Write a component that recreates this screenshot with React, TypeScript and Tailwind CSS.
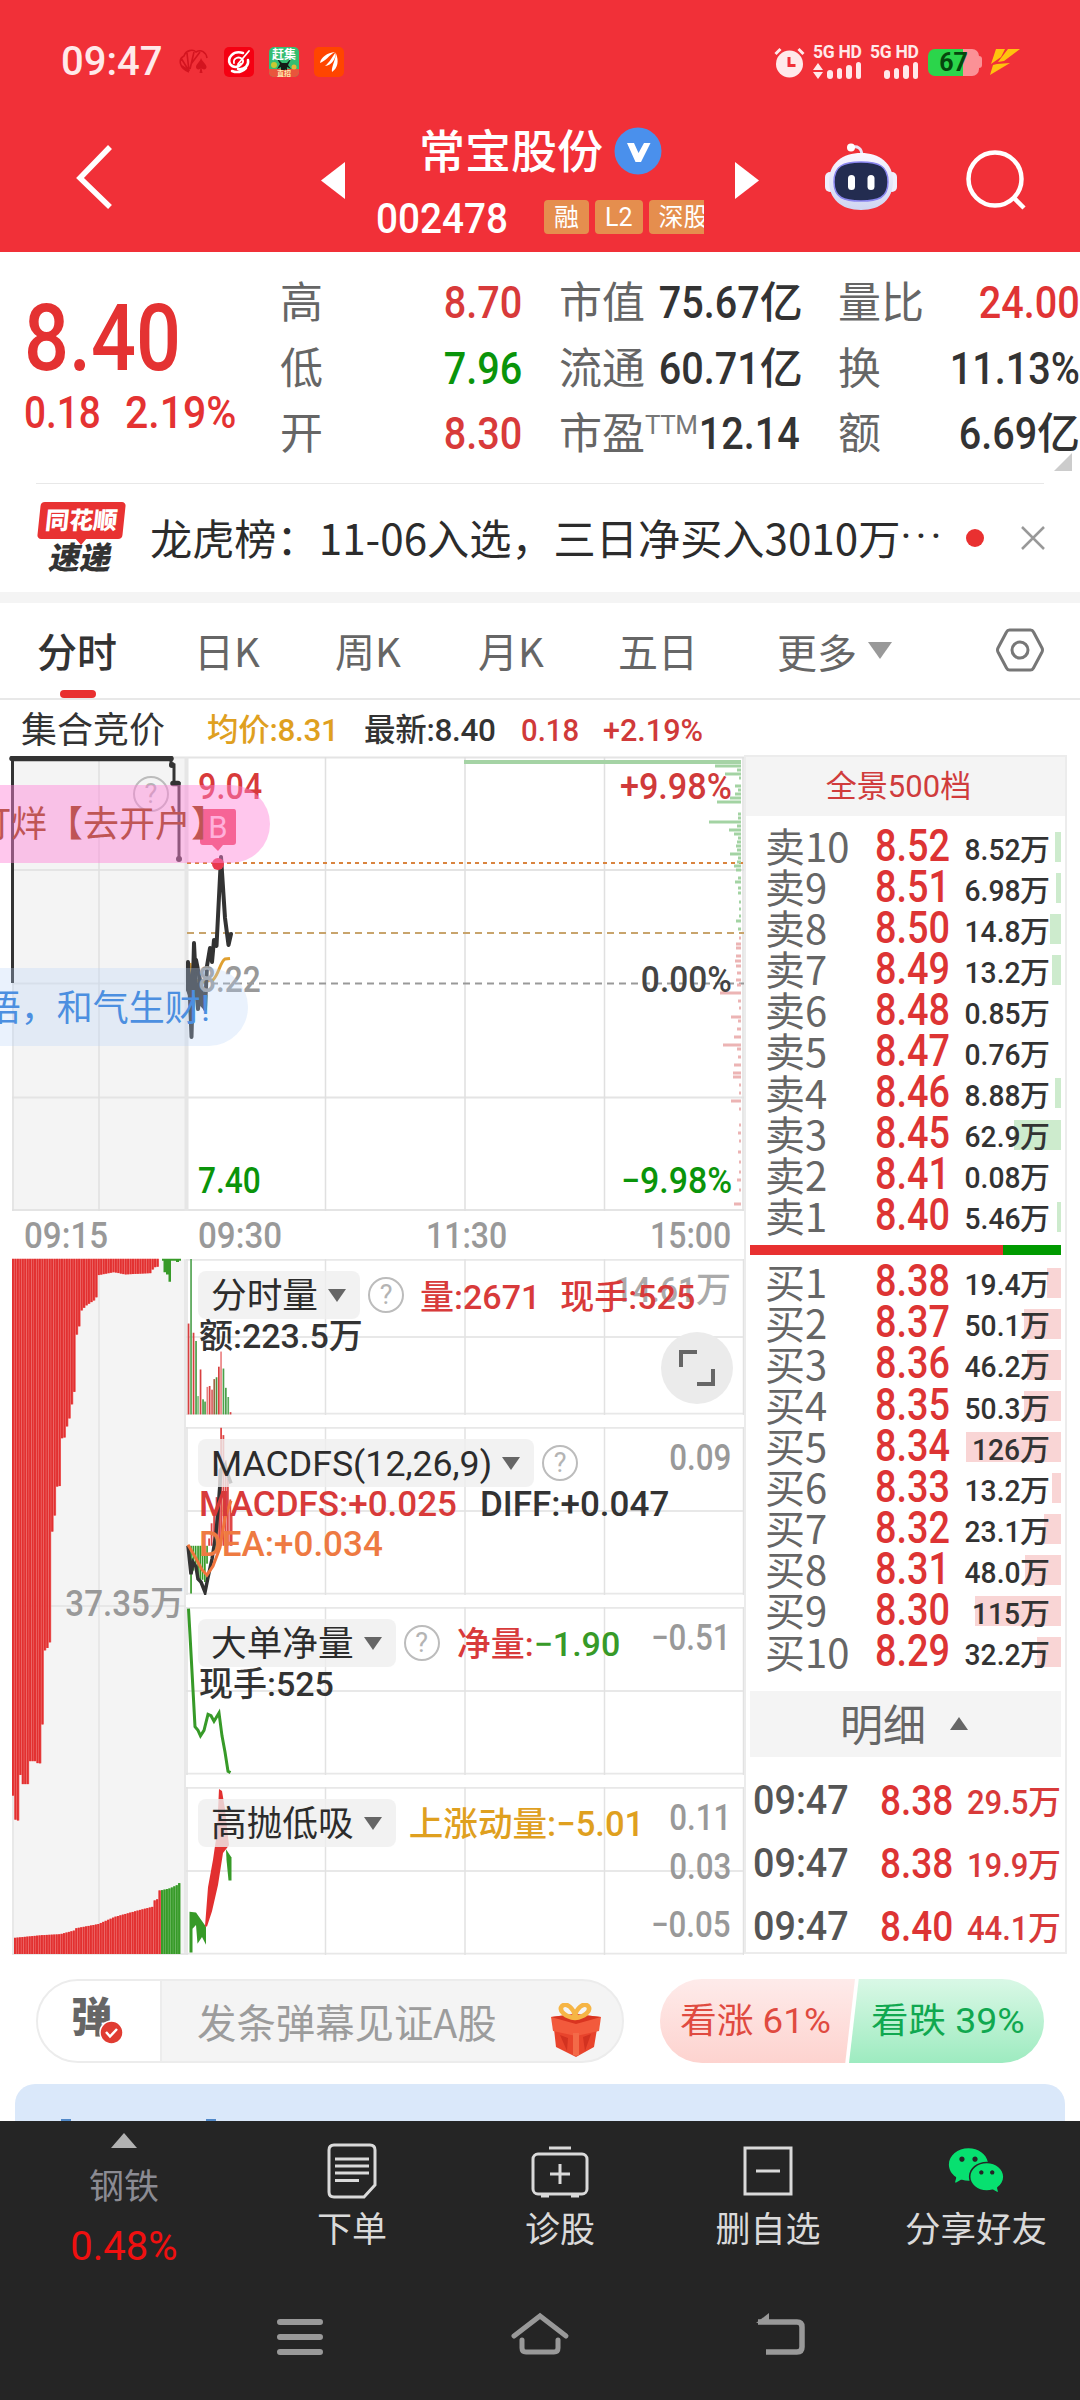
import React from 'react';
import { AiFillWechat } from 'react-icons/ai';
import clsx from 'clsx';

type Level = { label: string; price: string; vol: string; bar: number };

const sells: Level[] = [
  { label: '卖10', price: '8.52', vol: '8.52', bar: 6 },
  { label: '卖9', price: '8.51', vol: '6.98', bar: 5 },
  { label: '卖8', price: '8.50', vol: '14.8', bar: 11 },
  { label: '卖7', price: '8.49', vol: '13.2', bar: 9 },
  { label: '卖6', price: '8.48', vol: '0.85', bar: 0 },
  { label: '卖5', price: '8.47', vol: '0.76', bar: 0 },
  { label: '卖4', price: '8.46', vol: '8.88', bar: 6 },
  { label: '卖3', price: '8.45', vol: '62.9', bar: 47 },
  { label: '卖2', price: '8.41', vol: '0.08', bar: 0 },
  { label: '卖1', price: '8.40', vol: '5.46', bar: 4 },
];

const buys: Level[] = [
  { label: '买1', price: '8.38', vol: '19.4', bar: 14 },
  { label: '买2', price: '8.37', vol: '50.1', bar: 37 },
  { label: '买3', price: '8.36', vol: '46.2', bar: 34 },
  { label: '买4', price: '8.35', vol: '50.3', bar: 37 },
  { label: '买5', price: '8.34', vol: '126', bar: 95 },
  { label: '买6', price: '8.33', vol: '13.2', bar: 9 },
  { label: '买7', price: '8.32', vol: '23.1', bar: 17 },
  { label: '买8', price: '8.31', vol: '48.0', bar: 36 },
  { label: '买9', price: '8.30', vol: '115', bar: 86 },
  { label: '买10', price: '8.29', vol: '32.2', bar: 24 },
];

const deals = [
  { time: '09:47', price: '8.38', vol: '29.5' },
  { time: '09:47', price: '8.38', vol: '19.9' },
  { time: '09:47', price: '8.40', vol: '44.1' },
];

// [y, left edge] of the order depth drawn along the right side of the chart
const depthGreen = [
  [766, 715], [770, 737], [774, 725], [778, 739], [786, 735], [790, 738], [794, 735], [798, 730], [802, 717],
  [814, 738], [818, 738], [822, 709], [826, 737], [830, 729], [834, 734], [838, 738], [842, 737], [846, 736], [850, 737],
  [854, 730], [858, 738], [862, 737], [866, 734], [870, 736], [878, 738], [882, 735], [888, 738], [893, 738],
  [902, 739], [909, 739], [916, 739], [921, 736], [929, 738],
];
const depthRed = [
  [938, 739], [944, 736], [948, 736], [956, 736], [961, 735], [966, 736], [973, 737], [980, 736], [985, 737], [993, 720],
  [1001, 738], [1008, 739], [1017, 731], [1021, 738], [1029, 737], [1037, 734], [1045, 723], [1049, 737], [1057, 738],
  [1065, 734], [1073, 733], [1077, 733], [1085, 739], [1093, 739], [1101, 731], [1109, 739], [1125, 739], [1133, 738],
  [1141, 739], [1152, 738], [1162, 739], [1172, 739], [1180, 737], [1190, 739], [1204, 734],
];

const auctionTop = [
  [12, 1210], [14.9, 1210], [15, 1262], [19, 1265], [19.1, 1165], [21, 1165], [21.1, 1185], [29, 1185], [29.1, 1135], [36, 1135], [36.1, 1139],
  [41.5, 1140], [41.6, 1055], [44, 1055], [44.1, 895], [47, 890], [51, 870], [51.1, 635], [54, 635], [54.1, 600], [57, 600], [57.1, 537],
  [61.5, 535], [61.6, 432], [64.5, 430], [67, 405], [70, 384], [72, 355], [74.5, 328], [74.6, 206], [77, 206], [77.1, 188],
  [79.5, 188], [79.6, 158], [86, 143], [95, 130], [97, 122], [97.1, 77], [114, 70], [125, 75], [152, 72], [153, 60], [158, 58], [158.1, 44], [163, 43],
];
const auctionBottom = [
  [14, 1520], [28, 1517], [42, 1514], [60, 1512], [74, 1504], [76, 1499], [98, 1490], [115, 1474], [140, 1459], [153, 1452], [154, 1439], [158, 1435], [158.1, 1417], [162, 1416],
  [170, 1412], [177, 1405], [181, 1397],
];

const volBars: [number, number, string][] = [
  [188.5, 182, '#d84040'], [191, 41, '#55a555'], [193.5, 202, '#d84040'], [196, 220, '#4aa04a'], [198, 340, '#7fc07f'],
  [200.5, 282, '#d84040'], [203, 347, '#4aa04a'], [205, 352, '#4aa04a'], [207.3, 320, '#e88080'], [209.6, 318, '#d84040'],
  [212, 326, '#d86060'], [214.2, 303, '#a06040'], [216.5, 299, '#50903c'], [218.8, 276, '#d84040'], [221, 243, '#ec8484'],
  [223.4, 280, '#4aa04a'], [225.8, 322, '#4aa04a'], [228.2, 342, '#5cab5c'], [230.5, 375, '#d84040'],
];

const macdGreen = [[189, 690], [191, 770], [193.3, 720], [195.6, 715], [198, 735], [200.2, 745], [202.5, 740], [204.8, 745], [207, 705]];
const macdRed = [
  [209, 650], [211.5, 617], [214, 600], [216.5, 560], [219, 500], [221, 409], [223.3, 425], [225.6, 480], [227.8, 520], [230.2, 565], [231.5, 595],
];

const interp = (pts: number[][], x: number) => {
  for (let i = 1; i < pts.length; i++) {
    if (x <= pts[i][0]) {
      const [x0, y0] = pts[i - 1];
      const [x1, y1] = pts[i];
      return y0 + ((y1 - y0) * (x - x0)) / (x1 - x0 || 1);
    }
  }
  return pts[pts.length - 1][1];
};

const Help = ({ className = '' }) => (
  <span className={clsx('flex h-9 w-9 shrink-0 items-center justify-center rounded-full border-[2.5px] border-[#bcbcbc] text-[27px] leading-none font-normal text-[#b4b4b4]', className)}>
    ?
  </span>
);

const Badge = ({ children }: { children: React.ReactNode }) => (
  <div className="flex h-12 shrink-0 items-center rounded-lg bg-[#efefef]/80 pr-[14px] pl-[13px] text-[35.7px] leading-none font-normal whitespace-nowrap text-[#2c2c2c]">
    <span className="pt-[3px]">{children}</span>
    <span className="ml-[10px] h-0 w-0 border-x-[9.5px] border-t-[13px] border-x-transparent border-t-[#666]" />
  </div>
);

const Panel = ({ top, children, drawing, className }: { top: number; children: React.ReactNode; drawing: React.ReactNode; className: string }) => {
  const h = top === 41.4 ? 339.8 : 365.9;
  return (
    <div className={clsx('relative', className)}>
      <svg className="absolute inset-0 h-full w-full" viewBox={`186 ${top} 558 ${h}`} preserveAspectRatio="none">
        <g stroke="#e2e2e2" strokeWidth="1.5">
          <path d={`M186 ${top + 2}H744M186 ${top + h / 2}H744M186 ${top + h - 3}H744`} stroke="#e8e8e8" strokeWidth="4" />
          <path d={`M187 ${top}v${h}M325.5 ${top}v${h}M465 ${top}v${h}M604.5 ${top}v${h}M743.5 ${top}v${h}`} />
        </g>
        {drawing}
      </svg>
      <div className="relative pl-3 pt-3">{children}</div>
    </div>
  );
};

const Axis = ({ children, className }: { children: React.ReactNode; className: string }) => (
  <span className={clsx('absolute right-[13px] origin-right scale-x-[.87] text-[36px] leading-none font-medium text-[#999]', className)}>{children}</span>
);

const StatusBar = () => (
  <div className="flex h-[124px] items-center pl-[61px] text-[#ffe9ea]">
    <span className="w-[118px] text-[40px] leading-none font-medium">09:47</span>
    <svg className="w-[30px]" height="26" viewBox="0 0 30 26" fill="none" stroke="#d3141f" strokeWidth="1.6">
      <path d="M10 23C0 19-1 10 5 7C7 1 14 0 17 3C22 0 27 3 28 9M10 22L2 9M10 22L8 4M11 20L15 3M12 15L21 3M3 17l7 5" />
      <path d="M22 9c-1 4-5 6-5 9c0 3 4 3 4.500 1l-1 5h3l-1-5c1 2 5 2 5-1c0-3-4-5-5.500-9z" fill="#d3141f" stroke="none" />
    </svg>
    <svg className="ml-[15px]" width="30" height="30" viewBox="0 0 30 30">
      <rect width="30" height="30" rx="5" fill="#f50012" />
      <g fill="none" stroke="#fff" strokeLinecap="round">
        <path d="M19 6C9 3 3 11 6 17c3 4 8 4 11 0" strokeWidth="2.600" />
        <path d="M10 16c-1-5 5-7 8-4s-1 7-4 6M25 4L14 17" strokeWidth="1.800" />
        <path d="M24 13c1 5-3 10-10 9M8 24c5 2 10 1 14-3" strokeWidth="2.500" />
      </g>
    </svg>
    <svg className="ml-[15px]" width="30" height="30" viewBox="0 0 30 30">
      <rect width="30" height="30" rx="5" fill="#35bd72" />
      <path d="M0 22h30v3a5 5 0 0 1-5 5H5a5 5 0 0 1-5-5z" fill="#e9553c" />
      <circle cx="5" cy="18" r="3" fill="#c8c832" />
      <circle cx="25" cy="20" r="2.500" fill="#e6b83a" />
      <path d="M7 10l6 6h5l5-6-4 8 3 4-4-2v3h-6v-3l-4 2 3-5z" fill="#151a16" />
      <text x="15" y="12" textAnchor="middle" fontSize="12" fontWeight="700" fill="#fff">赶集</text>
      <text x="15" y="29" textAnchor="middle" fontSize="7" fontWeight="700" fill="#ffe9b0">直招</text>
    </svg>
    <svg className="ml-[15px]" width="30" height="30" viewBox="0 0 30 30">
      <rect width="30" height="30" rx="5" fill="#ff4500" />
      <path d="M6 16C7 10 13 6 21 5C15 8 12 14 6 16zM11 19C16 15 18 10 21.500 5.500C22 12 18 18 11 19zM18 25C17 20 21 15 22 6.500C25 14 24 21 18 25z" fill="#fff" />
    </svg>
    <svg className="ml-[430px]" width="31" height="31" viewBox="0 0 31 31">
      <circle cx="15.500" cy="17" r="13.500" fill="#ffe9ea" />
      <path d="M1.500 7l5-5M29.500 7l-5-5" stroke="#ffe9ea" strokeWidth="3" />
      <path d="M15 10v8.500h6.500" stroke="#f13038" strokeWidth="3" fill="none" />
    </svg>
    {[0, 1].map((i) => (
      <div key={i} className={clsx('flex h-[34px] w-[48px] flex-col justify-between', i === 0 ? 'ml-2' : 'ml-[9px]')}>
        <span className="text-[17.500px] leading-[15px] font-bold tracking-[-.3px] whitespace-nowrap">5G HD</span>
        <div className="flex items-end justify-end gap-1">
          {i === 0 && (
            <svg width="10" height="16" viewBox="0 0 10 16" fill="#ffe9ea">
              <path d="M0 7l5-7 5 7zM0 9l5 7 5-7z" />
            </svg>
          )}
          <i className="h-[9px] w-[5.500px] rounded-sm bg-[#ffe9ea]" />
          <i className="h-[11px] w-[5.500px] rounded-sm bg-[#ffe9ea]" />
          <i className="h-[14px] w-[5.500px] rounded-sm bg-[#ffe9ea]" />
          <i className="h-[17px] w-[5.500px] rounded-sm bg-[#ffe9ea]" />
        </div>
      </div>
    ))}
    <div className="ml-[10px] flex items-center">
      <div className="flex h-[27px] w-[51px] items-center justify-center rounded-[7px] bg-[linear-gradient(90deg,#2bd54b_68%,#fb9196_68%)] text-[25px] leading-none font-bold text-[#06460d]">67</div>
      <i className="h-[12px] w-[3px] rounded-r bg-[#fb9196]" />
    </div>
    <svg className="ml-[8px]" width="31" height="26" viewBox="0 0 31 26" fill="#ffc20e">
      <path d="M6 0h9L11 8L1 15zM18 0h12L14 12L8 13zM7 15l13-1L0 26l3-10z" />
    </svg>
  </div>
);

const Tag = ({ children }: { children: React.ReactNode }) => (
  <span className="h-[34px] shrink-0 rounded bg-[#e58e4e] px-[10px] text-[25px] leading-[35px] whitespace-nowrap">{children}</span>
);

const TitleBar = () => (
  <div className="flex h-32 text-white">
    <svg className="mt-[20px] ml-[76px] shrink-0" width="38" height="66" viewBox="0 0 38 66" fill="none" stroke="#fff" strokeWidth="5.500">
      <path d="M34 3L4 34L34 63" />
    </svg>
    <svg className="mt-[38px] ml-[207px] shrink-0" width="24" height="37" viewBox="0 0 24 37" fill="#fff">
      <path d="M24 0v37L0 18.500z" />
    </svg>
    <div className="ml-[31px] w-[330px]">
      <div className="flex items-center pl-[43px]">
        <span className="pt-[2px] text-[46px] leading-[52px] font-medium">常宝股份</span>
        <svg className="ml-[11px]" width="48" height="48" viewBox="0 0 48 48">
          <circle cx="24" cy="24" r="23.500" fill="#4a90ec" />
          <path d="M13 16h7l4.500 10L30 16h6.500L27 35h-5.500z" fill="#fff" />
        </svg>
      </div>
      <div className="mt-[21px] flex items-center">
        <span className="w-[168px] origin-left scale-x-[.9] pt-[2px] text-[43px] leading-[34px] font-medium">002478</span>
        <div className="flex w-[160px] gap-[6px] overflow-hidden">
          <Tag>融</Tag>
          <Tag>L2</Tag>
          <Tag>深股通</Tag>
        </div>
      </div>
    </div>
    <svg className="mt-[38px] ml-[29px] shrink-0" width="24" height="37" viewBox="0 0 24 37" fill="#fff">
      <path d="M0 0v37L24 18.500z" />
    </svg>
    <svg className="mt-[19px] ml-[66px] shrink-0" width="72" height="68" viewBox="0 0 72 68">
      <defs>
        <linearGradient id="head" x1="0" y1="0" x2="0" y2="1">
          <stop offset="0" stopColor="#fbf7ff" />
          <stop offset="1" stopColor="#cfd5f2" />
        </linearGradient>
      </defs>
      <path d="M26 5c6-3 11 0 11 8" stroke="#e9e4f6" strokeWidth="3" fill="none" />
      <circle cx="26" cy="4.500" r="4" fill="#fff" />
      <rect y="29" width="10" height="20" rx="5" fill="#f0eefc" />
      <rect x="62" y="29" width="10" height="20" rx="5" fill="#f0eefc" />
      <path d="M36 10C54 10 68 20 68 38S56 67 36 67S4 56 4 38S18 10 36 10z" fill="url(#head)" />
      <path d="M36 19c18 0 27 4 27 20s-10 19-27 19S9 55 9 39s9-20 27-20z" fill="#232c50" stroke="#8a86ef" strokeWidth="1.500" />
      <rect x="23" y="32" width="7" height="15" rx="3.500" fill="#fff" />
      <rect x="42.500" y="32" width="7" height="15" rx="3.500" fill="#fff" />
    </svg>
    <svg className="mt-[25px] ml-[68px] shrink-0" width="62" height="62" viewBox="0 0 62 62" fill="none" stroke="#fff" strokeWidth="4.500">
      <circle cx="30" cy="30" r="26.500" />
      <path d="M48.500 48.500L59 59" />
    </svg>
  </div>
);

const Stat = ({ label, sup, value, unit, color = 'text-[#333]' }: { label: string; sup?: string; value: string; unit?: string; color?: string }) => (
  <div className="flex h-[65.500px] items-center whitespace-nowrap">
    <span className="pt-[2px] text-[43px] leading-none text-[#666]">{label}</span>
    {sup && <span className="-mt-[18px] -mr-6 text-[26px] leading-none tracking-[-.5px] text-[#777]">{sup}</span>}
    <span className={clsx('ml-auto flex items-center leading-none', color)}>
      <span className="inline-block origin-right scale-x-[.88] text-[45px] font-medium">{value}</span>
      {unit && <span className="pt-[2px] text-[43px] font-medium">{unit}</span>}
    </span>
  </div>
);

const Quote = () => (
  <div className="relative flex h-[231px] pt-[18px]">
    <div className="w-[280px] pl-[24px] leading-none font-medium text-[#e43232]">
      <div className="mt-[23px] origin-left scale-x-[.86] text-[92px]">8.40</div>
      <div className="mt-[5px] flex text-[45px]">
        <span className="w-[101px] origin-left scale-x-[.86]">0.18</span>
        <span className="origin-left scale-x-[.91]">2.19%</span>
      </div>
    </div>
    <div className="w-[242px]">
      <Stat label="高" value="8.70" color="text-[#d83a3a]" />
      <Stat label="低" value="7.96" color="text-[#0a940a]" />
      <Stat label="开" value="8.30" color="text-[#d83a3a]" />
    </div>
    <div className="ml-[37px] w-[241px]">
      <Stat label="市值" value="75.67" unit="亿" />
      <Stat label="流通" value="60.71" unit="亿" />
      <Stat label="市盈" sup="TTM" value="12.14" />
    </div>
    <div className="ml-[38px] w-[242px]">
      <Stat label="量比" value="24.00" color="text-[#e03434]" />
      <Stat label="换" value="11.13%" />
      <Stat label="额" value="6.69" unit="亿" />
    </div>
    <span className="absolute top-[201px] right-2 h-0 w-0 border-b-[18px] border-l-[18px] border-b-[#ccc] border-l-transparent" />
  </div>
);

const News = () => (
  <div className="flex h-[108px] items-center pl-9">
    <div className="relative flex w-[90px] shrink-0 flex-col items-center">
      <span className="h-[37px] w-[85px] -skew-x-6 rounded bg-[#e83232] text-center text-[24px] leading-[38px] font-black text-white">同花顺</span>
      <span className="absolute top-[36px] h-0 w-0 border-x-[6px] border-t-[7px] border-x-transparent border-t-[#e83232]" />
      <span className="mt-[4px] -skew-x-12 text-[31px] leading-[32px] font-black text-[#333]">速递</span>
    </div>
    <div className="-mt-[3px] ml-[24px] flex w-[814px] text-[42.200px] leading-[60px] whitespace-nowrap text-[#2c2c2c]">
      <span className="[font-family:'Noto_Sans_CJK_SC',sans-serif]">龙虎榜：11-06入选，三日净买入3010万</span>
      <span className="tracking-[4px]">···</span>
    </div>
    <i className="ml-[2px] h-[18px] w-[18px] shrink-0 rounded-full bg-[#e93030]" />
    <svg className="ml-[37px] shrink-0" width="24" height="24" viewBox="0 0 24 24" stroke="#999" strokeWidth="2.500">
      <path d="M1 1L23 23M23 1L1 23" />
    </svg>
  </div>
);

const Tabs = () => (
  <div className="flex h-[97px] border-b-2 border-[#e8e8e8] [font-family:'Noto_Sans_CJK_SC',sans-serif] text-[40px] leading-[94px] text-[#666]">
    <div className="flex w-[158px] flex-col pl-[37px] font-medium text-[#333]">
      <span className="h-[87px]">分时</span>
      <i className="ml-[23px] h-[9px] w-9 rounded-full bg-[#e93030]" />
    </div>
    <span className="w-[141px] pl-[36px]">日K</span>
    <span className="w-[143px] pl-[36px]">周K</span>
    <span className="w-[140px] pl-[36px]">月K</span>
    <span className="w-[159px] pl-[36px]">五日</span>
    <span className="flex w-[254px] items-center pl-[36px]">
      更多
      <i className="ml-[11px] h-0 w-0 border-x-[12px] border-t-[17px] border-x-transparent border-t-[#999]" />
    </span>
    <svg className="mt-[24px]" width="50" height="46" viewBox="0 0 50 46" fill="none" stroke="#777" strokeWidth="3">
      <path d="M14.500 3h21q2 0 3 2L47 21q1 2 0 4L38.500 41q-1 2-3 2h-21q-2 0-3-2L3 25q-1-2 0-4L11.500 5q1-2 3-2z" />
      <circle cx="25" cy="23" r="8" />
    </svg>
  </div>
);

const MainChart = () => (
  <div className="relative h-[455px] text-[36px] leading-none font-medium">
    <svg className="absolute inset-0" width="744" height="455" viewBox="0 756 744 455" fill="none">
      <rect x="12" y="757" width="174" height="454" fill="#f4f4f4" />
      <path d="M12 757.500H744M12 870H744M12 983.500H186M12 1097.500H744M12 1210H744" stroke="#e4e4e4" strokeWidth="2" />
      <path d="M13 757V1211M99 757V1211M325.500 757V1211M465 757V1211M604.500 757V1211M743 757V1211" stroke="#e0e0e0" strokeWidth="1.500" />
      <path d="M186.500 757V1211" stroke="#e6e6e6" strokeWidth="4" />
      <path d="M187 863H744" stroke="#d9843f" strokeWidth="2" strokeDasharray="4 4" />
      <path d="M187 933H744" stroke="#c8a46c" strokeWidth="2" strokeDasharray="7 5" />
      <path d="M187 983.500H744" stroke="#999" strokeWidth="2" strokeDasharray="7 5" />
      <path d="M464 762H741" stroke="#a5d3a5" strokeWidth="4" />
      {depthGreen.map(([y, x]) => <rect key={y} x={x} y={y - 1.5} width={741 - x} height="3" fill="#a3d3a3" />)}
      {depthRed.map(([y, x]) => <rect key={y} x={x} y={y - 1.5} width={741 - x} height="3" fill="#ecb4b4" />)}
      <path d="M12.500 983V758" stroke="#333" strokeWidth="3" />
      <path d="M11 758.500H171V765H174V783.500H179V859" stroke="#333" strokeWidth="3" />
      <path d="M12 758.500H171" stroke="#333" strokeWidth="5.500" strokeLinecap="round" />
      <circle cx="172" cy="765" r="3" fill="#333" />
      <path d="M173 783.500H178" stroke="#333" strokeWidth="5.500" strokeLinecap="round" />
      <circle cx="179" cy="859" r="3" fill="#333" />
      <path d="M190 963L192 978L200 982L213 980C219 974 220 962 225 959L230 958.500" stroke="#e0a030" strokeWidth="3" />
      <path d="M188 962L190 1000L191.500 1037L194 943L196 985L198 1009L200 982L203 1000L205 1009L207 966L210 948L212 962L214 940L216.500 946L221 857L225 918L228.500 945L231 934" stroke="#333" strokeWidth="4" strokeLinejoin="round" strokeLinecap="round" />
      <path d="M188 962V990L192 1000V975L196 960L201 985V1004L205 1008" stroke="#333" strokeWidth="4" strokeLinejoin="round" />
      <path d="M201 809h33q2 0 2 3v30q0 3-3 3h-10l-5 6l-6-6h-9q-3 0-3-3v-30z" fill="#ee4a60" />
      <text x="218" y="838" textAnchor="middle" fontSize="31" fontWeight="400" fill="#ffd5dd">B</text>
      <circle cx="218" cy="864" r="6" fill="#e8384d" />
    </svg>
    <Help className="absolute top-5 left-[133px]" />
    <span className="absolute top-[13px] left-[198px] origin-left scale-x-[.9] text-[#d83a3a]">9.04</span>
    <span className="absolute top-[13px] right-[12px] origin-right scale-x-[.95] text-[#d03a3a]">+9.98%</span>
    <span className="absolute top-[206px] left-[198px] origin-left scale-x-[.88] text-[#999]">8.22</span>
    <span className="absolute top-[206px] right-[12px] origin-right scale-x-[.93] text-[#444]">0.00%</span>
    <span className="absolute bottom-[12px] left-[198px] origin-left scale-x-[.88] text-[#0a940a]">7.40</span>
    <span className="absolute right-[12px] bottom-[12px] origin-right scale-x-[.94] text-[#0a940a]">−9.98%</span>
    <div className="absolute top-[29px] left-0 flex h-[78px] w-[270px] justify-end overflow-hidden rounded-r-full bg-[#ff83d8]/45 pr-[43px] text-[36px] leading-[81px] font-normal whitespace-nowrap text-[#bf5555]">
      打烊【去开户】
    </div>
    <div className="absolute top-[212px] left-0 flex h-[78px] w-[248px] justify-end overflow-hidden rounded-r-full bg-[#b8d4fa]/30 pr-[38px] text-[36px] leading-[82px] font-normal whitespace-nowrap text-[#4c8fe0]">
      语，和气生财!
    </div>
  </div>
);

const AuctionVolume = () => {
  const topBars: number[] = [];
  for (let x = 12; x < 158.5; x += 2.45) topBars.push(x);
  const bottomBars: number[] = [];
  for (let x = 14; x < 180; x += 2.45) bottomBars.push(x);
  return (
    <div className="relative w-[186px]">
      <svg className="absolute inset-0 h-full w-full" viewBox="0 39.2 186 1518" preserveAspectRatio="none">
        <rect x="12" y="42" width="174" height="1514" fill="#f4f4f4" />
        <path d="M13 42V1555M99 42V1555M185 42V1555" stroke="#e4e4e4" strokeWidth="1.500" />
        <path d="M12 797H186M12 1555H186" stroke="#e2e2e2" strokeWidth="3" />
        {topBars.map((x) => (
          <g key={x}>
            <rect x={x} y="41" width="2.460" height={interp(auctionTop, x + 1) - 41} fill="#f07070" />
            <rect x={x} y="41" width="1.900" height={interp(auctionTop, x + 1) - 41} fill="#e23030" />
          </g>
        ))}
        <path d="M162 41H181V45H179V48H176V45H171V91H168.500V75H166V70H163.500V45H162z" fill="#379a28" />
        {bottomBars.map((x) => (
          <g key={x}>
            <rect x={x} y={interp(auctionBottom, x + 1)} width="2.460" height={1555 - interp(auctionBottom, x + 1)} fill={x > 160 ? '#6cb860' : '#f07070'} />
            <rect x={x} y={interp(auctionBottom, x + 1)} width="1.900" height={1555 - interp(auctionBottom, x + 1)} fill={x > 160 ? '#379a28' : '#e23030'} />
          </g>
        ))}
      </svg>
      <span className="absolute top-[328px] right-[2px] flex text-[34px] leading-none font-medium text-[#999]">
        <span className="origin-right scale-x-[.92] text-[36px]">37.35</span>万
      </span>
    </div>
  );
};

const Indicators = () => (
  <div className="flex h-[697px]">
    <AuctionVolume />
    <div className="flex w-[558px] flex-col gap-3 pt-px text-[35px] leading-none font-medium whitespace-nowrap">
      <Panel
        top={41.4}
        className="h-[156px]"
        drawing={volBars.map(([x, v, c]) => <rect key={x} x={x - 0.8} y={v} width="1.700" height={380 - v} fill={c} />)}
      >
        <div className="flex items-center">
          <Badge>分时量</Badge>
          <Help className="ml-2" />
          <span className="z-10 ml-[16px] pt-[3px] text-[34px] text-[#d83a3a]">量:2671</span>
          <span className="z-10 ml-[20px] pt-[3px] text-[34px] text-[#d83a3a]">现手:525</span>
        </div>
        <div className="pl-[1px] text-[34px] leading-[35px] text-[#333]">额:223.5万</div>
        <span className="absolute top-[14px] right-[13px] flex text-[#aaa]">
          <span className="origin-right scale-x-[.92]">14.61</span>万
        </span>
        <div className="absolute top-[73px] right-[11px] flex h-[72px] w-[72px] items-center justify-center rounded-full bg-[#ebebeb]">
          <svg width="38" height="38" viewBox="0 0 38 38" fill="none" stroke="#666" strokeWidth="4">
            <path d="M3 18V3H19M35 20V35H19" />
          </svg>
        </div>
      </Panel>
      <Panel
        top={407.3}
        className="h-[168px]"
        drawing={
          <g fill="none">
            {macdGreen.map(([x, v]) => <rect key={x} x={x - 0.8} y="666" width="1.700" height={v - 666} fill="#379a28" />)}
            {macdRed.map(([x, v]) => <rect key={x} x={x - 0.8} y={v} width="1.800" height={666 - v} fill="#e04848" />)}
            <path d="M188 666L191 728L193 702L196 712L198 738L201 745L205 767L208 735L212 695L216 640L219 560L221 500L225 490L228 512L231 530" stroke="#333" strokeWidth="3.500" vectorEffect="non-scaling-stroke" />
            <path d="M188 664L195 690L202 718L207 730L213 710L220 670L225 605L231 568" stroke="#f0743c" strokeWidth="3" vectorEffect="non-scaling-stroke" />
          </g>
        }
      >
        <div className="flex items-center">
          <Badge>MACDFS(12,26,9)</Badge>
          <Help className="ml-2" />
        </div>
        <div className="flex pl-[1px] leading-[35px] text-[#333]">
          <span className="w-[281px] text-[#d83a3a]">MACDFS:+0.025</span>
          DIFF:+0.047
        </div>
        <div className="mt-[6px] pl-[1px] leading-[34px] text-[#ee7a42]">DEA:+0.034</div>
        <Axis className="top-[13px]">0.09</Axis>
      </Panel>
      <Panel
        top={799.3}
        className="h-[168px]"
        drawing={
          <path d="M188.500 803L190 860L195 1060L198 1068L200.500 1080L204 1068L208 1033L211 1036L214 1048L219 1030L222 1080L225 1115L228 1157L230.500 1160" fill="none" stroke="#379a28" strokeWidth="3" vectorEffect="non-scaling-stroke" />
        }
      >
        <div className="flex items-center">
          <Badge>大单净量</Badge>
          <Help className="ml-2" />
          <span className="ml-[17px] pt-[2px] text-[34px] text-[#d83a3a]">净量:</span>
          <span className="pt-[2px] text-[34px] text-[#379a28]">−1.90</span>
        </div>
        <div className="pl-[1px] text-[34px] leading-[35px] text-[#333]">现手:525</div>
        <Axis className="top-[13px]">−0.51</Axis>
      </Panel>
      <Panel
        top={1191.4}
        className="h-[168px]"
        drawing={
          <>
            <path d="M189.500 1463L196 1465L206 1496V1535L202 1518L197.500 1533L196 1492L192.500 1500V1552H189.500z" fill="#379a28" />
            <path d="M205 1495L208 1410L213 1350L217 1290L219 1196L222 1200L225 1240L229 1318L223 1335L218 1405L212 1462L207 1495z" fill="#e23030" />
            <path d="M226 1327L231.500 1345V1395H228.500L226.500 1350z" fill="#379a28" />
          </>
        }
      >
        <div className="flex items-center">
          <Badge>高抛低吸</Badge>
          <span className="ml-[13px] pt-[2px] text-[34.600px] text-[#dfa01f]">上涨动量:−5.01</span>
        </div>
        <Axis className="top-[13px]">0.11</Axis>
        <Axis className="top-[62px]">0.03</Axis>
        <Axis className="top-[120px]">−0.05</Axis>
      </Panel>
    </div>
  </div>
);

const LevelRow = ({ row, barColor }: { row: Level; barColor: string }) => (
  <div className="relative flex h-[41.080px] items-center pl-[19px] leading-none whitespace-nowrap">
    <span className={clsx('absolute top-[7px] right-1 h-[30px]', barColor)} style={{ width: row.bar }} />
    <span className="relative w-[110px] [font-family:'Noto_Sans_CJK_SC',sans-serif] text-[40px] leading-[39px] text-[#666]">{row.label}</span>
    <span className="relative w-[72px] origin-left scale-x-[.86] text-[44px] font-medium text-[#dd3434]">{row.price}</span>
    <span className="relative mt-[8px] mr-[15px] ml-auto flex items-baseline text-[30px] font-medium text-[#333]">
      <span className="origin-right scale-x-[.94]">{row.vol}</span>万
    </span>
  </div>
);

const OrderBook = () => (
  <div className="-mt-px h-[1199px] w-[323px] border-2 border-[#ececec]">
    <div className="h-[59px] bg-[#f4f4f4] pr-[14px] text-center text-[31px] leading-[60px] text-[#d03c3c]">全景500档</div>
    <div className="pt-[9px]">
      {sells.map((r) => <LevelRow key={r.label} row={r} barColor="bg-[#cdebcd]" />)}
    </div>
    <div className="mt-[9px] mr-1 ml-1 flex h-[10px] bg-[#009a00]">
      <i className="w-[253px] bg-[#e83030]" />
    </div>
    <div className="pt-[6px]">
      {buys.map((r) => <LevelRow key={r.label} row={r} barColor="bg-[#f9d5d5]" />)}
    </div>
    <div className="mx-1 mt-[19px] flex h-[66px] items-center bg-[#f4f4f4] pl-[90px] text-[43px] leading-none text-[#666]">
      <span className="pt-[5px]">明细</span>
      <i className="ml-[24px] h-0 w-0 border-x-[9px] border-b-[13px] border-x-transparent border-b-[#666]" />
    </div>
    <div className="pt-[12px]">
      {deals.map((d, i) => (
        <div key={i} className="flex h-[63px] items-center pl-[7px] leading-none font-medium">
          <span className="w-[127px] origin-left scale-x-[.92] text-[41px] text-[#555]">{d.time}</span>
          <span className="w-[72px] origin-left scale-x-[.86] text-[43px] text-[#dd3434]">{d.price}</span>
          <span className="mt-1 mr-[4px] ml-auto flex items-baseline text-[33px] text-[#d83a3a]">
            <span className="origin-right scale-x-[.94]">{d.vol}</span>万
          </span>
        </div>
      ))}
    </div>
  </div>
);

const DanmuBar = () => (
  <div className="mt-[25px] flex h-[84px] px-9">
    <div className="flex w-[588px] overflow-hidden rounded-full border-2 border-[#ececec] bg-[#f4f4f4]">
      <div className="relative w-[124px] border-r-2 border-[#ececec] bg-white">
        <span className="absolute top-[15px] left-[33px] text-[41px] leading-[44px] font-black text-[#666]">弹</span>
        <svg className="absolute top-[39px] left-[61px]" width="25" height="25" viewBox="0 0 25 25">
          <circle cx="12.500" cy="12.500" r="11.500" fill="#e03c32" stroke="#fff" strokeWidth="1.500" />
          <path d="M7 12l4 4.500L18 9" fill="none" stroke="#fff" strokeWidth="2.500" />
        </svg>
      </div>
      <span className="w-[352px] pl-[35px] [font-family:'Noto_Sans_CJK_SC',sans-serif] text-[39.400px] leading-[80px] whitespace-nowrap text-[#9c9c9c]">发条弹幕见证A股</span>
      <svg className="mt-[22px] ml-[36px]" width="52" height="54" viewBox="0 0 52 54">
        <path d="M4 26L25 30L47 26L44 44L26 54L6 44z" fill="#e8442c" />
        <path d="M1 14L25 11L51 14L49 28L26 33L3 28z" fill="#f25a3c" />
        <path d="M1 14L25 11L51 14L26 21z" fill="#d93420" />
        <path d="M23 30h6v22l-3 1l-3-1z" fill="#f36a48" />
        <path d="M33 34l8-3-6 17zM10 32l8 3-1 13z" fill="#d23220" />
        <path d="M25 15C16 14 8 8 12 3C17-1 24 6 25 13C26 6 33-1 38 3C42 8 34 14 25 15z" fill="none" stroke="#f6b545" strokeWidth="4.500" />
      </svg>
    </div>
    <div className="ml-9 flex w-[384px] overflow-hidden rounded-full bg-white text-[35px] leading-[86px] whitespace-nowrap">
      <span className="w-[195px] bg-gradient-to-b from-[#feebea] to-[#fdd3cf] pl-[20px] text-[#e04a40] [clip-path:polygon(0_0,100%_0,95%_100%,0_100%)]">
        <span className="inline-block origin-left scale-x-[1.05]">看涨 61%</span>
      </span>
      <span className="-ml-[6px] w-[195px] bg-gradient-to-b from-[#d9f8e6] to-[#9debc0] pl-[22px] text-[#10a850] [clip-path:polygon(5%_0,100%_0,100%_100%,0_100%)]">
        <span className="inline-block origin-left scale-x-[1.07]">看跌 39%</span>
      </span>
    </div>
  </div>
);

const BottomBar = () => (
  <div className="h-[279px] bg-[#252525] text-[#dadada]">
    <div className="flex h-[160px] pl-[20px] text-[35px] leading-none">
      <div className="flex w-[208px] flex-col items-center">
        <span className="mt-[12px] h-0 w-0 border-x-[13px] border-b-[15px] border-x-transparent border-b-[#b2b2b2]" />
        <span className="mt-[22px] text-[#8b8b93]">钢铁</span>
        <span className="mt-[22px] text-[40px] text-[#f01010]">0.48%</span>
      </div>
      <div className="flex w-[248px] flex-col items-center">
        <svg className="mt-[22px]" width="50" height="56" viewBox="0 0 50 56" fill="none" stroke="#dadada" strokeWidth="3">
          <path d="M7 2H43q5 0 5 5V42L37 54H7q-5 0-5-5V7q0-5 5-5z" />
          <path d="M8 16H42M8 23H42M8 30H42M8 37.500H32" />
        </svg>
        <span className="mt-[14px]">下单</span>
      </div>
      <div className="flex w-[168px] flex-col items-center">
        <svg className="mt-[24px]" width="58" height="54" viewBox="0 0 58 54" fill="none" stroke="#dadada" strokeWidth="3">
          <path d="M18 3H40" />
          <rect x="2" y="9" width="54" height="40" rx="5" />
          <path d="M29 19V39M19 29H39M10 51h8M40 51h8" />
        </svg>
        <span className="mt-[14px]">诊股</span>
      </div>
      <div className="flex w-[248px] flex-col items-center">
        <svg className="mt-[25px]" width="50" height="50" viewBox="0 0 50 50" fill="none" stroke="#dadada" strokeWidth="3">
          <rect x="2" y="2" width="46" height="46" />
          <path d="M13 25H37" />
        </svg>
        <span className="mt-[17px]">删自选</span>
      </div>
      <div className="flex w-[168px] flex-col items-center">
        <AiFillWechat className="mt-[18px] h-[62px] w-[62px] text-[#07e070]" />
        <span className="mt-[12px] text-[35.500px] whitespace-nowrap">分享好友</span>
      </div>
    </div>
    <div className="flex items-start pt-[29px] pl-[276px]">
      <svg width="48" height="48" viewBox="0 0 48 48" stroke="#999" strokeWidth="6" strokeLinecap="round">
        <path d="M4 12H44M4 27H44M4 42H44" />
      </svg>
      <svg className="ml-[186px]" width="60" height="48" viewBox="0 0 60 48" fill="none" stroke="#999" strokeWidth="5" strokeLinecap="round">
        <path d="M4 26L30 6L56 26" />
        <path d="M12 30V38q0 4 4 4H44q4 0 4-4V30" />
      </svg>
      <svg className="ml-[185px]" width="52" height="48" viewBox="0 0 52 48" fill="none" stroke="#999" strokeWidth="5">
        <path d="M3 12H42q5 0 5 5V37q0 5-5 5H11" strokeWidth="5.500" />
        <path d="M1 13L14 3v9z" fill="#999" stroke="none" />
      </svg>
    </div>
  </div>
);

export default function App() {
  return (
    <div className="flex h-[2400px] w-[1080px] flex-col overflow-hidden bg-white [font-family:Roboto,'Noto_Sans_CJK_SC',sans-serif]">
      <header className="h-[252px] shrink-0 bg-[#f13038]">
        <StatusBar />
        <TitleBar />
      </header>
      <Quote />
      <div className="ml-9 h-px w-[1008px] shrink-0 bg-[#e8e8e8]" />
      <News />
      <div className="h-[11px] shrink-0 bg-[#f4f4f4]" />
      <Tabs />
      <div className="flex h-14 shrink-0 items-center pt-[5px] text-[31.500px] leading-none font-medium text-[#333]">
        <span className="ml-[21px] w-[186px] text-[36px] font-normal">集合竞价</span>
        <span className="w-[157px] tracking-[-.3px] text-[#dfa01f]">均价:8.31</span>
        <span className="w-[157px] tracking-[-.3px]">最新:8.40</span>
        <span className="w-[82px] origin-left scale-x-[.93] text-[#d03a3a]">0.18</span>
        <span className="origin-left scale-x-[.97] text-[#d03a3a]">+2.19%</span>
      </div>
      <div className="flex h-[1198px] shrink-0">
        <div className="w-[744px]">
          <MainChart />
          <div className="flex h-[47px] items-center pt-[2px] text-[36px] leading-none font-medium text-[#999]">
            <span className="ml-[24px] w-[174px] origin-left scale-x-[.92]">09:15</span>
            <span className="w-[228px] origin-left scale-x-[.92]">09:30</span>
            <span className="w-[224px] origin-left scale-x-[.89]">11:30</span>
            <span className="origin-left scale-x-[.89]">15:00</span>
          </div>
          <Indicators />
        </div>
        <OrderBook />
      </div>
      <DanmuBar />
      <div className="mx-[15px] mt-[21px] flex h-[37px] shrink-0 items-end rounded-t-[20px] bg-[#dae8fa] pl-[46px]">
        <i className="h-[2px] w-[10px] bg-[#5088c8]" />
        <i className="ml-[135px] h-[2px] w-[10px] bg-[#5088c8]" />
      </div>
      <BottomBar />
    </div>
  );
}
